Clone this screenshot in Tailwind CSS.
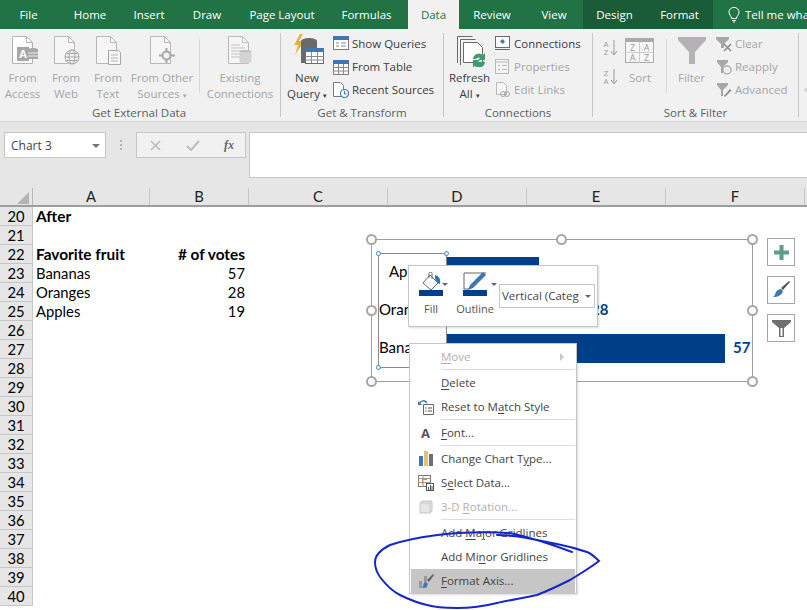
<!DOCTYPE html>
<html><head><meta charset="utf-8"><title>Excel</title>
<script src="https://cdn.jsdelivr.net/npm/@tailwindcss/browser@4"></script>
</head>
<body class="m-0 overflow-hidden">
<div class="relative w-[807px] h-[610px] overflow-hidden bg-white font-['Open_Sans','Noto_Sans',sans-serif] text-[11.5px] leading-[16px] text-[#444]">

<!-- tabs -->
<div class="flex h-[29px] bg-[#217346] text-white text-[11.5px] items-stretch overflow-hidden">
  <div class="w-[57px] shrink-0 flex items-center justify-center">File</div>
  <div class="w-[66px] shrink-0 flex items-center justify-center">Home</div>
  <div class="w-[52px] shrink-0 flex items-center justify-center">Insert</div>
  <div class="w-[64px] shrink-0 flex items-center justify-center">Draw</div>
  <div class="w-[86px] shrink-0 flex items-center justify-center">Page Layout</div>
  <div class="w-[83px] shrink-0 flex items-center justify-center">Formulas</div>
  <div class="w-[51px] shrink-0 flex items-center justify-center bg-[#f1f1f1] text-[#217346]">Data</div>
  <div class="w-[66px] shrink-0 flex items-center justify-center">Review</div>
  <div class="w-[58px] shrink-0 flex items-center justify-center">View</div>
  <div class="w-[63px] shrink-0 flex items-center justify-center bg-[#1a5c38]">Design</div>
  <div class="w-[67px] shrink-0 flex items-center justify-center bg-[#1a5c38]">Format</div>
  <div class="shrink-0 flex items-center pl-[15px] gap-[5px] whitespace-nowrap">
    <svg width="12" height="16" viewBox="0 0 12 16" fill="none" stroke="#fff" stroke-width="1"><path d="M3.500 11.500C3.500 9 1 8 1 5a5 4.600 0 0 1 10 0c0 3-2.500 4-2.500 6.500zM4 13.500h4M5 15h2"/></svg>
    <span>Tell me what you want to do</span>
  </div>
</div>

<!-- ribbon -->
<div class="flex h-[93px] bg-[#f1f1f1] border-b border-[#d4d4d4] overflow-hidden">

  <!-- Get External Data -->
  <div class="w-[281px] shrink-0 flex flex-col border-r border-[#c6c6c6] my-[4px] text-[#a5a5a5]">
    <div class="flex h-[76px] shrink-0 -mt-[4px] pt-[4px]">
      <div class="w-[45px] flex flex-col items-center">
        <svg width="30" height="34" viewBox="0 0 30 34" class="ml-[2px]"><path d="M3.500 3.500h14l6 6v21h-20z" fill="#fff" stroke="#b4b2b4"/><path d="M17.500 3.500v6h6" fill="none" stroke="#b4b2b4"/><rect x="8" y="14" width="12" height="14" fill="#a8a6a8"/><text x="14" y="25" font-size="11" font-weight="700" text-anchor="middle" fill="#fff">A</text><ellipse cx="24" cy="17" rx="5" ry="2" fill="#a8a6a8"/><rect x="19" y="17" width="10" height="9" fill="#a8a6a8"/><path d="M19 20h10M19 23h10" stroke="#eee"/></svg>
        <div class="text-center mt-[3px]">From<br>Access</div>
      </div>
      <div class="w-[42px] flex flex-col items-center">
        <svg width="30" height="34" viewBox="0 0 30 34"><path d="M3.500 3.500h14l6 6v21h-20z" fill="#f6f6f6" stroke="#b9b7b9"/><path d="M17.500 3.500v6h6" fill="none" stroke="#b9b7b9"/><circle cx="21" cy="24" r="7" fill="#f1f1f1" stroke="#a8a6a8"/><ellipse cx="21" cy="24" rx="3" ry="7" fill="none" stroke="#a8a6a8"/><path d="M14 24h14M15 20.500h12M15 27.500h12" stroke="#a8a6a8"/></svg>
        <div class="text-center mt-[3px]">From<br>Web</div>
      </div>
      <div class="w-[42px] flex flex-col items-center">
        <svg width="30" height="34" viewBox="0 0 30 34"><path d="M3.500 3.500h14l6 6v21h-20z" fill="#f6f6f6" stroke="#b9b7b9"/><path d="M17.500 3.500v6h6" fill="none" stroke="#b9b7b9"/><path d="M15.500 17.500h10l2 2v12h-12z" fill="#f6f6f6" stroke="#a8a6a8"/><path d="M18 22h7M18 25h7M18 28h7" stroke="#b9b7b9"/></svg>
        <div class="text-center mt-[3px]">From<br>Text</div>
      </div>
      <div class="w-[66px] flex flex-col items-center">
        <svg width="30" height="34" viewBox="0 0 30 34"><path d="M3.500 3.500h14l6 6v21h-20z" fill="#f6f6f6" stroke="#b9b7b9"/><path d="M17.500 3.500v6h6" fill="none" stroke="#b9b7b9"/><circle cx="19.500" cy="22.500" r="4" fill="#f1f1f1" stroke="#a8a6a8" stroke-width="2"/><path d="M19.500 15v4M19.500 26v4M12 22.500h4M23 22.500h5" stroke="#a8a6a8" stroke-width="2"/></svg>
        <div class="text-center mt-[3px] whitespace-nowrap">From Other<br>Sources <span class="text-[7px]">▾</span></div>
      </div>
      <div class="w-px h-[54px] bg-[#d8d8d8] mt-[6px] ml-[4px]"></div>
      <div class="w-[80px] flex flex-col items-center">
        <svg width="30" height="34" viewBox="0 0 30 34"><path d="M3.500 3.500h14l6 6v21h-20z" fill="#f6f6f6" stroke="#b9b7b9"/><path d="M17.500 3.500v6h6M6 12h9M6 15h14M6 18h14M6 21h9M6 24h9" fill="none" stroke="#c4c2c4"/><ellipse cx="20.500" cy="19" rx="6" ry="2" fill="#bdbbbd"/><path d="M14.500 19v9a6 2.500 0 0 0 12 0v-9z" fill="#d5d3d5"/></svg>
        <div class="text-center mt-[3px]">Existing<br>Connections</div>
      </div>
    </div>
    <div class="text-center text-[#5f5f5f] pr-[2px]">Get External Data</div>
  </div>

  <!-- Get & Transform -->
  <div class="w-[163px] shrink-0 flex flex-col border-r border-[#c6c6c6] my-[4px]">
    <div class="flex h-[76px] shrink-0 -mt-[4px] pt-[4px]">
      <div class="w-[52px] flex flex-col items-center">
        <svg width="34" height="34" viewBox="0 0 34 34"><path d="M10 1 4 12h4l-3 10 9-14h-5l4-7z" fill="#e8b13f"/><ellipse cx="19" cy="8" rx="8" ry="3" fill="#6a6a6a"/><path d="M11 8v22h16V8z" fill="#6a6a6a"/><rect x="15.500" y="15.500" width="18" height="15" fill="#fff" stroke="#6a6a6a"/><rect x="15" y="15" width="19" height="4" fill="#3f76b4"/><path d="M15.500 23.500h18M15.500 27h18M21.500 19v11M27.500 19v11" stroke="#8a8a8a"/></svg>
        <div class="text-center mt-[3px] text-[#3c3c3c] whitespace-nowrap">New<br>Query <span class="text-[7px]">▾</span></div>
      </div>
      <div class="flex flex-col text-[#3c3c3c] -mt-[1px]">
        <div class="h-[23px] flex items-center gap-[3px]"><svg width="16" height="15" viewBox="0 0 16 15"><rect x=".5" y=".5" width="15" height="13" fill="#fff" stroke="#7a7a7a"/><rect x="0" y="0" width="16" height="4" fill="#3f76b4"/><path d="M3 7h3M3 10h3M8 7h5M8 10h5" stroke="#8a8a8a"/></svg><span class="whitespace-nowrap">Show Queries</span></div>
        <div class="h-[23px] flex items-center gap-[3px]"><svg width="16" height="16" viewBox="0 0 16 16"><rect x=".5" y="1.500" width="15" height="14" fill="#fff" stroke="#7a7a7a"/><rect x="0" y="1" width="16" height="4" fill="#3f76b4"/><path d="M0 8.500h16M0 12h16M5.500 5v10M10.500 5v10" stroke="#8a8a8a"/></svg><span class="whitespace-nowrap">From Table</span></div>
        <div class="h-[23px] flex items-center gap-[3px]"><svg width="16" height="16" viewBox="0 0 16 16"><path d="M.5.500h7l3 3v11h-10z" fill="#fff" stroke="#7a7a7a"/><circle cx="11.500" cy="11.500" r="4" fill="#fff" stroke="#3f76b4" stroke-width="1.200"/><path d="M11.500 9v3h2" fill="none" stroke="#3f76b4"/></svg><span class="whitespace-nowrap">Recent Sources</span></div>
      </div>
    </div>
    <div class="text-center text-[#5f5f5f]">Get &amp; Transform</div>
  </div>

  <!-- Connections -->
  <div class="w-[149px] shrink-0 flex flex-col border-r border-[#c6c6c6] my-[4px]">
    <div class="flex h-[76px] shrink-0 -mt-[4px] pt-[4px]">
      <div class="w-[51px] flex flex-col items-center">
        <svg width="34" height="34" viewBox="0 0 34 34"><path d="M4.500 30V3.500h15" fill="none" stroke="#6a6a6a"/><path d="M7.500 32V6.500h15" fill="none" stroke="#6a6a6a"/><path d="M10.500 9.500h14l5 5v15h-19z" fill="#fff" stroke="#6a6a6a"/><path d="M20 26a6 6 0 0 1 10-4l2-2v7h-7l2-2a3 3 0 0 0-4 1z" fill="#3f9a72"/><path d="M32 29a6 6 0 0 1-10 4l-2 1v-7h7l-2 2a3 3 0 0 0 4-1z" fill="#3f9a72"/></svg>
        <div class="text-center mt-[3px] text-[#3c3c3c]">Refresh<br>All <span class="text-[7px]">▾</span></div>
      </div>
      <div class="flex flex-col -mt-[1px]">
        <div class="h-[23px] flex items-center gap-[4px] text-[#3c3c3c]"><svg width="15" height="15" viewBox="0 0 15 15"><rect x=".5" y=".5" width="14" height="11" fill="#fff" stroke="#6a6a6a"/><path d="M7.500 3 10 5.500 7.500 8 5 5.500z" fill="#3f76b4"/><path d="M0 13.500h15" stroke="#6a6a6a"/></svg><span>Connections</span></div>
        <div class="h-[23px] flex items-center gap-[4px] text-[#a5a5a5]"><svg width="15" height="15" viewBox="0 0 15 15"><rect x=".5" y=".5" width="13" height="14" fill="#f6f6f6" stroke="#b9b7b9"/><path d="M0 3h14M3 6.500h2M3 10.500h2M7 6.500h5M7 10.500h5" stroke="#b9b7b9"/></svg><span>Properties</span></div>
        <div class="h-[23px] flex items-center gap-[4px] text-[#a5a5a5]"><svg width="15" height="15" viewBox="0 0 15 15"><path d="M1.500.500h7l3 3v9h-10z" fill="#f6f6f6" stroke="#b9b7b9"/><circle cx="8" cy="12" r="2.500" fill="none" stroke="#a8a6a8"/><circle cx="12" cy="12" r="2.500" fill="none" stroke="#a8a6a8"/></svg><span>Edit Links</span></div>
      </div>
    </div>
    <div class="text-center text-[#5f5f5f]">Connections</div>
  </div>

  <!-- Sort & Filter -->
  <div class="w-[206px] shrink-0 flex flex-col border-r border-[#c6c6c6] my-[4px] text-[#a5a5a5]">
    <div class="flex h-[76px] shrink-0 -mt-[4px] pt-[4px]">
      <div class="w-[32px] flex flex-col items-center pl-[1px] pt-[6px] gap-[11px]">
        <svg width="16" height="18" viewBox="0 0 16 18"><text x="4" y="8" font-size="8" text-anchor="middle" fill="#9a9a9a">A</text><text x="4" y="16" font-size="8" text-anchor="middle" fill="#9a9a9a">Z</text><path d="M12 1v14M9 12l3 4 3-4" fill="none" stroke="#9a9a9a"/></svg>
        <svg width="16" height="18" viewBox="0 0 16 18"><text x="4" y="8" font-size="8" text-anchor="middle" fill="#9a9a9a">Z</text><text x="4" y="16" font-size="8" text-anchor="middle" fill="#9a9a9a">A</text><path d="M12 1v14M9 12l3 4 3-4" fill="none" stroke="#9a9a9a"/></svg>
      </div>
      <div class="w-[30px] flex flex-col items-center">
        <svg width="30" height="34" viewBox="0 0 30 34"><rect x=".5" y="5.500" width="28" height="24" fill="#f6f6f6" stroke="#aaa"/><rect x="0" y="5" width="29" height="4" fill="#aaa"/><path d="M14.500 9v21M0 19.500h29" stroke="#ccc"/><text x="7.500" y="18" font-size="9" text-anchor="middle" fill="#9a9a9a">Z</text><text x="21.500" y="18" font-size="9" text-anchor="middle" fill="#9a9a9a">A</text><text x="7.500" y="28" font-size="9" text-anchor="middle" fill="#9a9a9a">A</text><text x="21.500" y="28" font-size="9" text-anchor="middle" fill="#9a9a9a">Z</text></svg>
        <div class="mt-[3px]">Sort</div>
      </div>
      <div class="w-px h-[54px] bg-[#d8d8d8] mt-[6px] ml-[11px]"></div>
      <div class="w-[49px] flex flex-col items-center">
        <svg width="30" height="34" viewBox="0 0 30 34"><path d="M1 4h28v3L18 19v12h-6V19L1 7z" fill="#b4b2b4"/></svg>
        <div class="mt-[3px]">Filter</div>
      </div>
      <div class="flex flex-col -mt-[1px] whitespace-nowrap">
        <div class="h-[23px] flex items-center gap-[3px]"><svg width="16" height="16" viewBox="0 0 16 16"><path d="M0 1h13v2L8 8v4H5V8L0 3z" fill="#a8a6a8"/><path d="M8 8l7 7M15 8l-7 7" stroke="#8a8a8a" stroke-width="1.500"/></svg><span>Clear</span></div>
        <div class="h-[23px] flex items-center gap-[3px]"><svg width="16" height="16" viewBox="0 0 16 16"><path d="M1 1h11v2L7 8v6H5V8L1 3z" fill="#a8a6a8"/><circle cx="11" cy="11" r="4" fill="none" stroke="#b0b0b0" stroke-width="1.500"/></svg><span>Reapply</span></div>
        <div class="h-[23px] flex items-center gap-[3px]"><svg width="16" height="16" viewBox="0 0 16 16"><path d="M1 1h11v2L7 8v6H5V8L1 3z" fill="#a8a6a8"/><path d="M8 14l6-7 1.500 1.500L9 15z" fill="#8a8a8a"/></svg><span>Advanced</span></div>
      </div>
    </div>
    <div class="text-center text-[#5f5f5f]">Sort &amp; Filter</div>
  </div>
  <svg width="9" height="16" viewBox="0 0 9 16" class="mt-[53px] ml-[5px]"><circle cx="6" cy="8" r="4" fill="none" stroke="#b0b0b0" stroke-width="2"/></svg>
</div>

<!-- formula area -->
<div class="h-[66px] bg-[#e6e6e6] flex items-start pt-[10px] pl-[4px]">
  <div class="w-[102px] h-[26px] bg-white border border-[#c6c6c6] flex items-center justify-between pl-[6px] pr-[5px] pt-[1px] text-[12px] text-[#444]">
    <span>Chart 3</span><span class="w-0 h-0 border-x-[4px] border-x-transparent border-t-[4px] border-t-[#777]"></span>
  </div>
  <div class="w-[30px] h-[26px] flex items-center justify-center">
    <svg width="3" height="11" viewBox="0 0 3 11"><path d="M0 0h2v2H0zM0 4h2v2H0zM0 8h2v2H0z" fill="#b4b4b4"/></svg>
  </div>
  <div class="w-[110px] h-[26px] bg-[#f1f1f1] border border-[#c6c6c6] flex items-center pl-[13px]">
    <svg width="11" height="11" viewBox="0 0 11 11" class="mr-[25px]"><path d="M1 1l9 9M10 1l-9 9" stroke="#bcbcbc" stroke-width="1.600"/></svg>
    <svg width="14" height="11" viewBox="0 0 14 11" class="mr-[24px]"><path d="M1 6l4 4 8-9" fill="none" stroke="#bcbcbc" stroke-width="2"/></svg>
    <span class="font-['Liberation_Serif',serif] italic font-bold text-[12px] text-[#666]">fx</span>
  </div>
  <div class="w-[3px]"></div>
  <div class="flex-1 h-[46px] bg-white border border-[#c6c6c6] border-r-0"></div>
</div>

<!-- sheet -->
<div class="font-['Lato',sans-serif] text-[14.8px] text-black">
  <div class="flex h-[19px] bg-[#e6e6e6] border-b-2 border-[#9e9e9e] text-[#222] leading-[17px] text-center">
    <div class="w-[33px] shrink-0 relative border-r border-[#b8b8b8]"><div class="absolute right-[3px] bottom-[1px] w-0 h-0 border-l-[12px] border-l-transparent border-b-[12px] border-b-[#b4b4b4]"></div></div>
    <div class="w-[117px] shrink-0 border-r border-[#c6c6c6]">A</div>
    <div class="w-[99px] shrink-0 border-r border-[#c6c6c6]">B</div>
    <div class="w-[139px] shrink-0 border-r border-[#c6c6c6]">C</div>
    <div class="w-[139px] shrink-0 border-r border-[#c6c6c6]">D</div>
    <div class="w-[139px] shrink-0 border-r border-[#c6c6c6]">E</div>
    <div class="w-[139px] shrink-0 border-r border-[#c6c6c6]">F</div>
  </div>
  <div class="grid grid-cols-[33px_117px_99px] auto-rows-[19px] leading-[18px]">
    <div class="bg-[#e6e6e6] border-b border-r border-[#c6c6c6] text-center">20</div><div class="pl-[3px] font-bold text-[15.4px]">After</div><div></div>
    <div class="bg-[#e6e6e6] border-b border-r border-[#c6c6c6] text-center">21</div><div></div><div></div>
    <div class="bg-[#e6e6e6] border-b border-r border-[#c6c6c6] text-center">22</div><div class="pl-[3px] font-bold text-[15.4px]">Favorite fruit</div><div class="text-right pr-[4px] font-bold text-[15.4px]"># of votes</div>
    <div class="bg-[#e6e6e6] border-b border-r border-[#c6c6c6] text-center">23</div><div class="pl-[3px]">Bananas</div><div class="text-right pr-[4px]">57</div>
    <div class="bg-[#e6e6e6] border-b border-r border-[#c6c6c6] text-center">24</div><div class="pl-[3px]">Oranges</div><div class="text-right pr-[4px]">28</div>
    <div class="bg-[#e6e6e6] border-b border-r border-[#c6c6c6] text-center">25</div><div class="pl-[3px]">Apples</div><div class="text-right pr-[4px]">19</div>
    <div class="bg-[#e6e6e6] border-b border-r border-[#c6c6c6] text-center">26</div><div></div><div></div>
    <div class="bg-[#e6e6e6] border-b border-r border-[#c6c6c6] text-center">27</div><div></div><div></div>
    <div class="bg-[#e6e6e6] border-b border-r border-[#c6c6c6] text-center">28</div><div></div><div></div>
    <div class="bg-[#e6e6e6] border-b border-r border-[#c6c6c6] text-center">29</div><div></div><div></div>
    <div class="bg-[#e6e6e6] border-b border-r border-[#c6c6c6] text-center">30</div><div></div><div></div>
    <div class="bg-[#e6e6e6] border-b border-r border-[#c6c6c6] text-center">31</div><div></div><div></div>
    <div class="bg-[#e6e6e6] border-b border-r border-[#c6c6c6] text-center">32</div><div></div><div></div>
    <div class="bg-[#e6e6e6] border-b border-r border-[#c6c6c6] text-center">33</div><div></div><div></div>
    <div class="bg-[#e6e6e6] border-b border-r border-[#c6c6c6] text-center">34</div><div></div><div></div>
    <div class="bg-[#e6e6e6] border-b border-r border-[#c6c6c6] text-center">35</div><div></div><div></div>
    <div class="bg-[#e6e6e6] border-b border-r border-[#c6c6c6] text-center">36</div><div></div><div></div>
    <div class="bg-[#e6e6e6] border-b border-r border-[#c6c6c6] text-center">37</div><div></div><div></div>
    <div class="bg-[#e6e6e6] border-b border-r border-[#c6c6c6] text-center">38</div><div></div><div></div>
    <div class="bg-[#e6e6e6] border-b border-r border-[#c6c6c6] text-center">39</div><div></div><div></div>
    <div class="bg-[#e6e6e6] border-b border-r border-[#c6c6c6] text-center">40</div><div></div><div></div>
  </div>
</div>

<!-- chart -->
<div class="absolute left-[371px] top-[239px] w-[382px] h-[143px] border border-[#9e9e9e] bg-white font-['Lato',sans-serif] text-[15px] text-black">
  <div class="absolute left-[75px] top-[17px] w-[92px] h-[29px] bg-[#004088]"></div>
  <div class="absolute left-[75px] top-[56px] w-[139px] h-[29px] bg-[#004088]"></div>
  <div class="absolute left-[75px] top-[94px] w-[278px] h-[29px] bg-[#004088]"></div>
  <div class="absolute left-[6px] top-[13px] w-[69px] h-[115px] border border-[#8a8a8a]"></div>
  <div class="absolute left-[17px] top-[23px]">Apples</div>
  <div class="absolute left-[7px] top-[61px]">Oranges</div>
  <div class="absolute left-[7px] top-[99px]">Bananas</div>
  <div class="absolute left-[219px] top-[61px] font-bold text-[#004088]">28</div>
  <div class="absolute left-[361px] top-[99px] font-bold text-[#004088]">57</div>
  <!-- blue axis handles -->
  <div class="absolute left-[4px] top-[11px] w-[5px] h-[5px] rounded-full bg-white border border-[#2b88d8]"></div>
  <div class="absolute left-[72px] top-[11px] w-[5px] h-[5px] rounded-full bg-white border border-[#2b88d8]"></div>
  <div class="absolute left-[4px] top-[125px] w-[5px] h-[5px] rounded-full bg-white border border-[#2b88d8]"></div>
  <!-- chart handles -->
  <div class="absolute -left-[6px] -top-[6px] w-[11px] h-[11px] rounded-full bg-white border-2 border-[#a6a6a6]"></div>
  <div class="absolute left-[184px] -top-[6px] w-[11px] h-[11px] rounded-full bg-white border-2 border-[#a6a6a6]"></div>
  <div class="absolute -right-[6px] -top-[6px] w-[11px] h-[11px] rounded-full bg-white border-2 border-[#a6a6a6]"></div>
  <div class="absolute -left-[6px] top-[65px] w-[11px] h-[11px] rounded-full bg-white border-2 border-[#a6a6a6]"></div>
  <div class="absolute -right-[6px] top-[65px] w-[11px] h-[11px] rounded-full bg-white border-2 border-[#a6a6a6]"></div>
  <div class="absolute -left-[6px] -bottom-[6px] w-[11px] h-[11px] rounded-full bg-white border-2 border-[#a6a6a6]"></div>
  <div class="absolute left-[184px] -bottom-[6px] w-[11px] h-[11px] rounded-full bg-white border-2 border-[#a6a6a6]"></div>
  <div class="absolute -right-[6px] -bottom-[6px] w-[11px] h-[11px] rounded-full bg-white border-2 border-[#a6a6a6]"></div>
</div>

<!-- chart side buttons -->
<div class="absolute left-[767px] top-[238px] flex flex-col gap-[10px]">
  <div class="w-[28px] h-[28px] bg-white border border-[#a6a6a6] flex items-center justify-center"><svg width="15" height="15" viewBox="0 0 15 15"><path d="M5.500 0h4v5.500H15v4H9.500V15h-4V9.500H0v-4h5.500z" fill="#5f9e85"/></svg></div>
  <div class="w-[28px] h-[28px] bg-white border border-[#a6a6a6] flex items-center justify-center"><svg width="20" height="20" viewBox="0 0 20 20"><path d="M18 1l1 1-7 8-2-2z" fill="#555"/><path d="M10 9l2 2c-1 4-5 6-10 6 2-1 2-3 3-5 1-2 3-3 5-3z" fill="#3f76b4"/></svg></div>
  <div class="w-[28px] h-[28px] bg-white border border-[#a6a6a6] flex items-center justify-center"><svg width="19" height="17" viewBox="0 0 19 17"><path d="M0 0h19v2l-7 6v9H7V8L0 2z" fill="#6f6f6f"/><path d="M8.500 8v8h2V8z" fill="#fff"/></svg></div>
</div>

<!-- mini toolbar -->
<div class="absolute left-[408px] top-[265px] w-[190px] h-[62px] bg-white border border-[#c6c6c6] shadow-[1px_1px_2px_rgba(0,0,0,0.15)] flex text-[#555] text-[11px]">
  <div class="w-[44px] flex flex-col items-center pt-[6px] relative">
    <svg width="24" height="18" viewBox="0 0 24 18"><path d="M11 3l8 8-7 7-8-7z" fill="#fff" stroke="#666"/><path d="M10 6V1.500a1.500 1.500 0 0 1 3 0V7" fill="none" stroke="#666"/><path d="M16 3c4 1 6 4 5 9-2 0-3-3-5-5z" fill="#2e75b6"/></svg>
    <div class="w-[24px] h-[6px] bg-[#004088]"></div>
    <div class="mt-[5px]">Fill</div>
    <span class="absolute left-[33px] top-[17px] w-0 h-0 border-x-[3px] border-x-transparent border-t-[3px] border-t-[#666]"></span>
  </div>
  <div class="w-[44px] flex flex-col items-center pt-[6px] relative">
    <svg width="24" height="18" viewBox="0 0 24 18"><path d="M23 1H1v16h5" fill="none" stroke="#666"/><path d="M20 0l3 3-13 13-5 2 2-5z" fill="#3f76b4"/></svg>
    <div class="w-[24px] h-[6px] bg-[#004088]"></div>
    <div class="mt-[5px]">Outline</div>
    <span class="absolute left-[38px] top-[17px] w-0 h-0 border-x-[3px] border-x-transparent border-t-[3px] border-t-[#666]"></span>
  </div>
  <div class="absolute left-[90px] top-[18px] w-[96px] h-[24px] bg-white border border-[#c6c6c6] flex items-center pl-[2px] text-[11.5px] text-[#444] whitespace-nowrap overflow-hidden"><span class="w-[79px] overflow-hidden">Vertical (Categ</span><span class="ml-[4px] w-0 h-0 border-x-[3px] border-x-transparent border-t-[3px] border-t-[#666]"></span></div>
</div>

<!-- context menu -->
<div class="absolute left-[409px] top-[343px] w-[168px] h-[251px] bg-white border border-[#c6c6c6] shadow-[1px_1px_2px_rgba(0,0,0,0.15)] text-[#444] py-[1px]">
  <div class="h-[24px] flex items-center pl-[31px] pr-[12px] justify-between text-[#b0b0b0]"><span><u class="underline-offset-2">M</u>ove</span><span class="w-0 h-0 border-y-[4px] border-y-transparent border-l-[4px] border-l-[#c6c6c6]"></span></div>
  <div class="h-px bg-[#dcdcdc] ml-[31px] mr-[1px]"></div>
  <div class="h-[25px] flex items-center pl-[31px]"><span><u class="underline-offset-2">D</u>elete</span></div>
  <div class="h-[24px] flex items-center"><span class="w-[31px] flex justify-center pl-[1px]"><svg width="17" height="15" viewBox="0 0 17 15"><path d="M5.500 4.500h10v10h-10z" fill="#fff" stroke="#666"/><path d="M7 8h1.500M7 11h1.500M10 8h4M10 11h4" stroke="#555"/><path d="M1 4c2-4 6-4 8-1" fill="none" stroke="#3f76b4" stroke-width="1.500"/><path d="M0 1v4h4z" fill="#3f76b4"/></svg></span><span>Reset to M<u class="underline-offset-2">a</u>tch Style</span></div>
  <div class="h-px bg-[#dcdcdc] ml-[31px] mr-[1px]"></div>
  <div class="h-[25px] flex items-center"><span class="w-[31px] flex justify-center font-bold text-[13px] text-[#555]">A</span><span><u class="underline-offset-2">F</u>ont...</span></div>
  <div class="h-px bg-[#dcdcdc] ml-[31px] mr-[1px]"></div>
  <div class="h-[25px] flex items-center"><span class="w-[31px] flex justify-center pl-[1px]"><svg width="15" height="15" viewBox="0 0 15 15"><rect x="0" y="5" width="4" height="10" fill="#3f76b4"/><rect x="5" y="0" width="4" height="15" fill="#e6bf78"/><rect x="10" y="3" width="4" height="12" fill="#6f6f6f"/></svg></span><span>Change Chart T<u class="underline-offset-2">y</u>pe...</span></div>
  <div class="h-[24px] flex items-center"><span class="w-[31px] flex justify-center pl-[1px]"><svg width="16" height="16" viewBox="0 0 16 16"><rect x=".5" y=".5" width="12" height="11" fill="#fff" stroke="#777"/><path d="M0 3.500h13M5 0v12M0 7.500h13" stroke="#999"/><path d="M4 4h5v1H4zM4 5h1v4H4z" fill="#e08a3c"/><rect x="8.500" y="8.500" width="7" height="7" fill="#fff" stroke="#555"/><path d="M10.500 15v-3M12.500 15V10M14 15v-4" stroke="#555"/></svg></span><span>S<u class="underline-offset-2">e</u>lect Data...</span></div>
  <div class="h-[24px] flex items-center text-[#b0b0b0]"><span class="w-[31px] flex justify-center"><svg width="14" height="14" viewBox="0 0 14 14"><path d="M3 1h10v10l-2 2H1V3z" fill="#e9e5e9" stroke="#c6c6c6"/><path d="M1 3h10v10M11 3l2-2" fill="none" stroke="#c6c6c6"/></svg></span><span>3-D <u class="underline-offset-2">R</u>otation...</span></div>
  <div class="h-px bg-[#dcdcdc] ml-[31px] mr-[1px]"></div>
  <div class="h-[24px] mt-[1px] flex items-center pl-[31px]"><span>Add <u class="underline-offset-2">M</u>a<u class="underline-offset-2">j</u>or Gridlines</span></div>
  <div class="h-[24px] flex items-center pl-[31px]"><span>Add Mi<u class="underline-offset-2">n</u>or Gridlines</span></div>
  <div class="h-[24px] flex items-center bg-[#c6c6c6] mx-[1px]"><span class="w-[30px] flex justify-center"><svg width="16" height="16" viewBox="0 0 16 16"><path d="M1 15V8h3v7zM6 15V3h3v12z" fill="#9a9a9a"/><path d="M15 1l1 1-5 7-2-2z" fill="#666"/><path d="M6 10c2-1 3 0 4 1-1 3-3 4-6 4 1-1 1-3 2-5z" fill="#3f76b4"/></svg></span><span><u class="underline-offset-2">F</u>ormat Axis...</span></div>
</div>

<!-- hand-drawn ellipse -->
<svg class="absolute left-0 top-0 pointer-events-none" width="807" height="610" viewBox="0 0 807 610" fill="none">
  <path d="M572 552C556 546 533 538 510 533C470 531 425 534 390 545C380 550 375 556 375 562C375 570 378 574 380 577C386 585 392 591 400 595C410 600 418 603 427 605C437 608 447 608 457 608C470 608 485 606 497 603C510 600 524 598 537 595C550 590 560 585 570 580C580 574 590 568 599 561C595 557 592 554 587 552C578 549 567 546 557 544C547 542 537 540 527 538C517 536 507 535 497 535" stroke="#1428c8" stroke-width="2" stroke-linecap="round"/>
</svg>
</div>
</body></html>
